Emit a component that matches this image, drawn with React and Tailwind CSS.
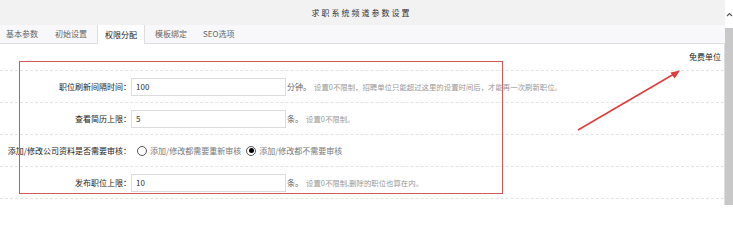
import React from "react";

const F = "font-['Noto_Sans_CJK_SC','Noto_Sans',sans-serif]";

function Row({ label, children }) {
  return (
    <div className="h-[32px] shrink-0 border-t border-dashed border-[#e4e4e4] flex items-center">
      <div className="w-[131px] shrink-0 text-right text-[8px] text-[#1a1a1a] whitespace-nowrap">{label}</div>
      <div className="flex items-center text-[8px] whitespace-nowrap">{children}</div>
    </div>
  );
}

function Input({ value }) {
  return (
    <div className="w-[155px] h-[18px] shrink-0 border border-[#dcdcdc] bg-white flex items-center pl-[4px] text-[8px] text-[#333]">
      {value}
    </div>
  );
}

export default function App() {
  return (
    <div className={`w-[733px] h-[205px] relative overflow-hidden bg-white flex ${F}`}>
      <div className="w-[725px] h-[205px] flex flex-col">
        <div className="h-[25px] shrink-0 bg-[#f2f2f2] flex items-center justify-center">
          <span className="text-[8px] text-[#333] tracking-[2px] pr-[2px]">求职系统频道参数设置</span>
        </div>
        <div className="h-[19px] shrink-0 bg-[#f8f8fa] border-b border-[#dedede] flex items-stretch text-[8px] text-[#666]">
          <div className="pl-[6px] w-[55px] flex items-center">基本参数</div>
          <div className="w-[42px] flex items-center">初始设置</div>
          <div className="w-[48px] -mb-px bg-white border-x border-[#dedede] flex items-center justify-center text-[#222]">权限分配</div>
          <div className="pl-[10px] w-[58px] flex items-center">模板绑定</div>
          <div className="flex items-center">SEO选项</div>
        </div>
        <div className="flex-1 min-h-0 border-r border-[#dedede] flex flex-col">
          <div className="h-[26px] shrink-0 flex items-center justify-end pr-[3px] text-[8px] text-[#222]">免费单位</div>
          <Row label="职位刷新间隔时间：">
            <Input value="100" />
            <span className="ml-[1px] text-[#666]">分钟。</span>
            <span className="ml-[3px] text-[7.4px] text-[#999]">设置0不限制，招聘单位只能超过这里的设置时间后，才能再一次刷新职位。</span>
          </Row>
          <Row label="查看简历上限：">
            <Input value="5" />
            <span className="ml-[1px] text-[#666]">条。</span>
            <span className="ml-[3px] text-[7.4px] text-[#999]">设置0不限制。</span>
          </Row>
          <Row label="添加/修改公司资料是否需要审核：">
            <div className="ml-[6px] w-[10px] h-[10px] rounded-full border border-[#555] bg-white" />
            <span className="ml-[3px] text-[#777]">添加/修改都需要重新审核</span>
            <div className="ml-[5px] w-[10px] h-[10px] rounded-full border border-[#555] bg-white flex items-center justify-center">
              <div className="w-[5px] h-[5px] rounded-full bg-black" />
            </div>
            <span className="ml-[3px] text-[#777]">添加/修改都不需要审核</span>
          </Row>
          <Row label="发布职位上限：">
            <Input value="10" />
            <span className="ml-[1px] text-[#666]">条。</span>
            <span className="ml-[3px] text-[7.4px] text-[#999]">设置0不限制,删除的职位也算在内。</span>
          </Row>
          <div className="h-[32px] shrink-0 border-t border-dashed border-[#e4e4e4]" />
        </div>
      </div>
      <div className="w-[8px] flex flex-col bg-white">
        <div className="h-[28px] shrink-0 flex items-center justify-center">
          <svg width="7" height="5" viewBox="0 0 7 5"><path d="M1 4 L3.5 1.5 L6 4" stroke="#555" strokeWidth="1.2" fill="none" /></svg>
        </div>
        <div className="flex-1 bg-[#c8c8c8]" />
      </div>
      <div className="absolute left-[19px] top-[61px] w-[484px] h-[133px] border border-[#cf5a5e] pointer-events-none" />
      <svg className="absolute left-0 top-0 pointer-events-none" width="733" height="205">
        <line x1="578" y1="130" x2="674" y2="74" stroke="#e23b3b" strokeWidth="1.5" />
        <path d="M680 70.5 L670.5 72.5 L674.5 78.5 Z" fill="#e23b3b" />
      </svg>
    </div>
  );
}
